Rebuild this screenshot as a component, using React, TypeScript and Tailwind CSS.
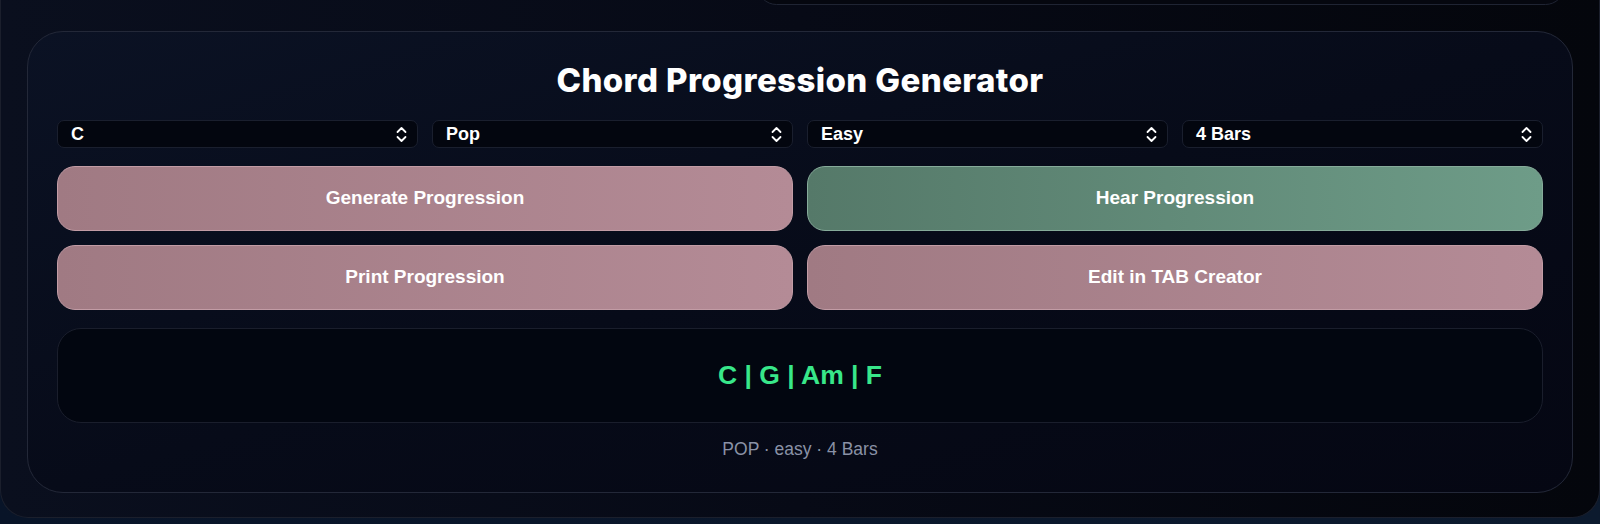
import React from "react";

const selects = ["C", "Pop", "Easy", "4 Bars"];

const actions = [
  { label: "Generate Progression", tone: "pink" },
  { label: "Hear Progression", tone: "green" },
  { label: "Print Progression", tone: "pink" },
  { label: "Edit in TAB Creator", tone: "pink" },
];

function UpDown() {
  return (
    <svg width="11" height="17" viewBox="0 0 11 17" fill="none" className="shrink-0">
      <path d="M1.5 6 L5.5 2 L9.5 6" stroke="white" strokeWidth="1.8" strokeLinecap="round" strokeLinejoin="round" />
      <path d="M1.5 11 L5.5 15 L9.5 11" stroke="white" strokeWidth="1.8" strokeLinecap="round" strokeLinejoin="round" />
    </svg>
  );
}

function FakeSelect({ value }: { value: string }) {
  return (
    <div className="flex h-[28px] items-center justify-between rounded-[7px] border border-[#1a1f2e] bg-[#03060f] pl-[13px] pr-[10px]">
      <span className="text-[18px] font-bold leading-none text-white">{value}</span>
      <UpDown />
    </div>
  );
}

function ActionButton({ label, tone }: { label: string; tone: string }) {
  const toneClass =
    tone === "green"
      ? "bg-gradient-to-r from-[#557969] to-[#6e9c88] border-[#86ab9a]"
      : "bg-gradient-to-r from-[#a07a83] to-[#b48b96] border-[#c29ca5]";
  return (
    <button
      className={`flex h-[65px] items-center justify-center rounded-[18px] border text-[19px] font-bold text-white ${toneClass}`}
    >
      {label}
    </button>
  );
}

export default function App() {
  return (
    <div
      className="h-[524px] overflow-hidden bg-gradient-to-r from-[#081428] to-[#0c1a2e]"
      style={{ fontFamily: '"Liberation Sans", Arial, sans-serif' }}
    >
      <section className="-mt-[60px] rounded-b-[28px] border-x border-b border-[#1b1f2c] bg-gradient-to-r from-[#0a0f1e] via-[#070a16] to-[#04060c] px-[26px] pb-[24px] pt-[26px]">
        <div className="flex justify-end pr-[8px]">
          <div className="h-[39px] w-[808px] rounded-[30px] border border-[#1f2433] bg-[#05070f]" />
        </div>

        <div className="mt-[26px] rounded-[36px] border border-[#232838] bg-gradient-to-br from-[#0b1224] via-[#070b19] to-[#050713] px-[29px] pb-[30px] pt-[28px]">
          <h1
            className="text-center text-[33px] font-extrabold leading-[41px] tracking-[0.4px] text-white"
            style={{ fontFamily: "Inter, sans-serif" }}
          >
            Chord Progression Generator
          </h1>

          <div className="mt-[19px] grid grid-cols-4 gap-[14px]">
            {selects.map((s) => (
              <FakeSelect key={s} value={s} />
            ))}
          </div>

          <div className="mt-[18px] grid grid-cols-2 gap-[14px]">
            {actions.map((a) => (
              <ActionButton key={a.label} label={a.label} tone={a.tone} />
            ))}
          </div>

          <div className="mt-[18px] flex h-[95px] items-center justify-center rounded-[24px] border border-[#1a1e2c] bg-[#020610]">
            <span className="text-[26.5px] font-bold text-[#38e78a]">C | G | Am | F</span>
          </div>

          <p className="mt-[14px] text-center text-[17.5px] leading-[25px] text-[#8a92a6]">POP · easy · 4 Bars</p>
        </div>
      </section>
    </div>
  );
}
